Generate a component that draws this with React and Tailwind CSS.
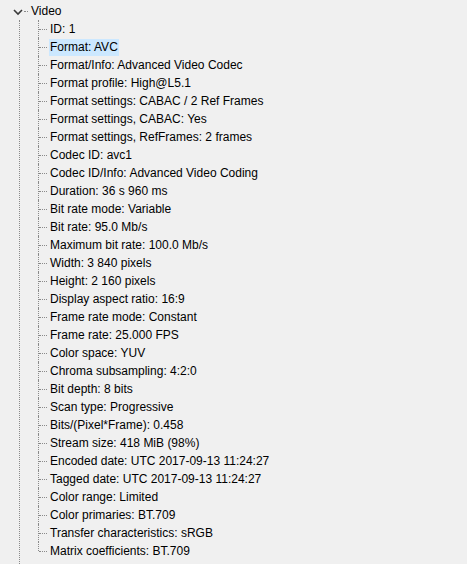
import React from 'react';

const fields = [
  'ID: 1',
  'Format: AVC',
  'Format/Info: Advanced Video Codec',
  'Format profile: High@L5.1',
  'Format settings: CABAC / 2 Ref Frames',
  'Format settings, CABAC: Yes',
  'Format settings, RefFrames: 2 frames',
  'Codec ID: avc1',
  'Codec ID/Info: Advanced Video Coding',
  'Duration: 36 s 960 ms',
  'Bit rate mode: Variable',
  'Bit rate: 95.0 Mb/s',
  'Maximum bit rate: 100.0 Mb/s',
  'Width: 3 840 pixels',
  'Height: 2 160 pixels',
  'Display aspect ratio: 16:9',
  'Frame rate mode: Constant',
  'Frame rate: 25.000 FPS',
  'Color space: YUV',
  'Chroma subsampling: 4:2:0',
  'Bit depth: 8 bits',
  'Scan type: Progressive',
  'Bits/(Pixel*Frame): 0.458',
  'Stream size: 418 MiB (98%)',
  'Encoded date: UTC 2017-09-13 11:24:27',
  'Tagged date: UTC 2017-09-13 11:24:27',
  'Color range: Limited',
  'Color primaries: BT.709',
  'Transfer characteristics: sRGB',
  'Matrix coefficients: BT.709',
];

const Row = ({ text, last, selected }) => (
  <div className="flex h-[18px] items-stretch">
    <div className="relative w-[9px] shrink-0">
      <div
        className={`absolute left-0 top-0 border-l border-dotted border-[#8a8a8a] ${last ? 'h-[9px]' : 'h-full'}`}
      />
      <div className="absolute left-[1px] top-[9px] w-[8px] border-t border-dotted border-[#8a8a8a]" />
    </div>
    <div className="flex items-center pl-[2px]">
      <span
        className={`leading-[17px] h-[17px] px-[1px] whitespace-nowrap ${selected ? 'bg-[#cce8ff]' : ''}`}
      >
        {text}
      </span>
    </div>
  </div>
);

export default function App() {
  return (
    <div
      className="w-[467px] h-[564px] overflow-hidden bg-[#f0f0f0] text-[12px] text-black"
      style={{ fontFamily: '"Liberation Sans", Arial, sans-serif' }}
    >
      <div className="flex h-[20px] items-center pt-[2px]">
        <div className="w-[13px] shrink-0" />
        <svg width="10" height="7" viewBox="0 0 10 7" className="shrink-0 mt-[2px]">
          <path d="M1 1 L5 5 L9 1" fill="none" stroke="#3a3a3a" strokeWidth="1.6" />
        </svg>
        <div className="ml-[1px] w-[4px] border-t border-dotted border-[#8a8a8a]" />
        <span className="ml-[3px]">Video</span>
      </div>
      <div className="flex">
        <div className="w-[19px] shrink-0">
          <div className="h-[600px] border-l border-dotted border-[#8a8a8a] translate-x-[19px]" />
        </div>
        <div className="w-[19px] shrink-0" />
        <div className="flex flex-col">
          {fields.map((f, i) => (
            <Row key={f} text={f} last={i === fields.length - 1} selected={i === 1} />
          ))}
        </div>
      </div>
    </div>
  );
}
